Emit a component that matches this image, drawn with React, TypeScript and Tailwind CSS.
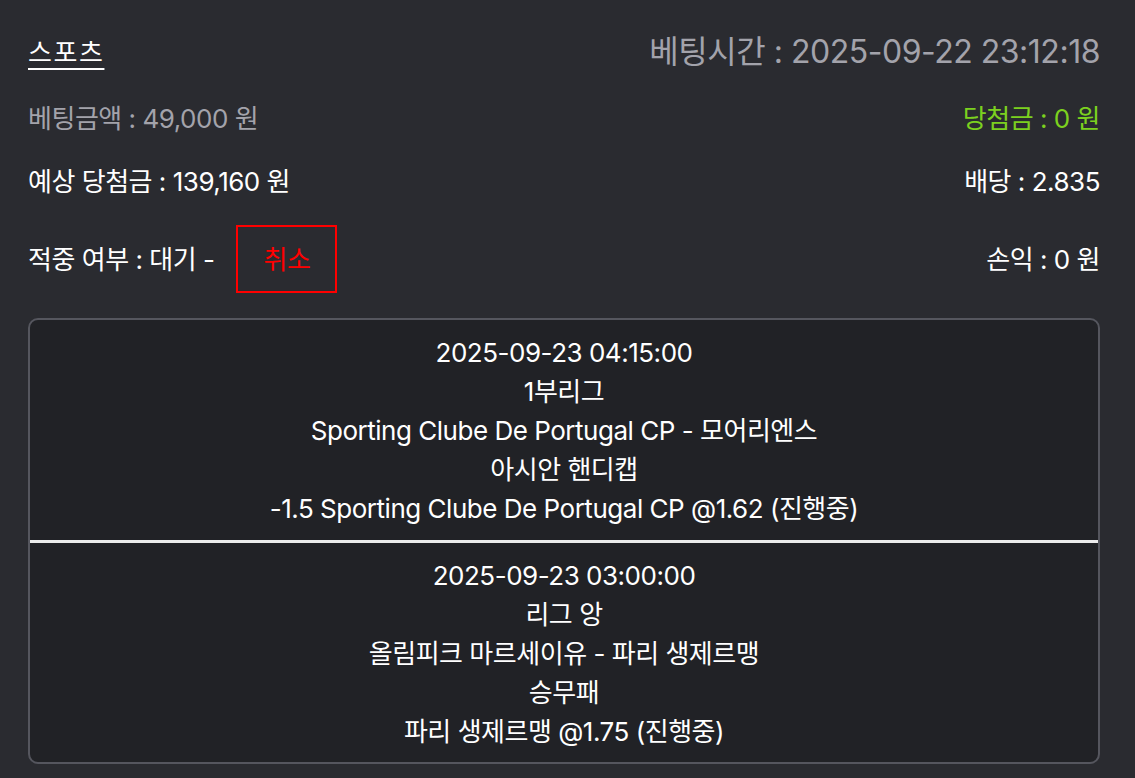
import React from "react";

const FONT = { fontFamily: '"Inter", "Noto Sans CJK KR", sans-serif' };

type Game = {
  time: string;
  league: string;
  match: string;
  market: string;
  pick: string;
};

const games: Game[] = [
  {
    time: "2025-09-23 04:15:00",
    league: "1부리그",
    match: "Sporting Clube De Portugal CP - 모어리엔스",
    market: "아시안 핸디캡",
    pick: "-1.5 Sporting Clube De Portugal CP @1.62 (진행중)",
  },
  {
    time: "2025-09-23 03:00:00",
    league: "리그 앙",
    match: "올림피크 마르세이유 - 파리 생제르맹",
    market: "승무패",
    pick: "파리 생제르맹 @1.75 (진행중)",
  },
];

export default function App() {
  return (
    <div
      className="min-h-[778px] w-full bg-[#2a2b30] pl-[28px] pr-[35px] pt-[24px] pb-[13px] text-white tracking-[-0.03em]"
      style={FONT}
    >
      {/* Header */}
      <div className="flex h-[56px] items-center justify-between">
        <span className="text-[26px] tracking-[0.06em] underline decoration-[2px] underline-offset-[6px]">
          스포츠
        </span>
        <span className="text-[32px] text-[#a3a3ab]">베팅시간 : 2025-09-22 23:12:18</span>
      </div>

      <div className="mt-[14px] flex h-[48px] items-center justify-between text-[26px]">
        <span className="text-[#a3a3ab]">베팅금액 : 49,000 원</span>
        <span className="text-[#7cd11f]">당첨금 : 0 원</span>
      </div>

      <div className="mt-[15px] flex h-[48px] items-center justify-between text-[26px]">
        <span>예상 당첨금 : 139,160 원</span>
        <span>배당 : 2.835</span>
      </div>

      <div className="mt-[20px] flex h-[68px] items-center justify-between text-[26px]">
        <div className="flex items-center">
          <span>적중 여부 : 대기 -</span>
          <button className="ml-[22px] flex h-[68px] w-[101px] items-center justify-center border-2 border-[#ff0000] text-[26px] text-[#ff0000]">
            취소
          </button>
        </div>
        <span>손익 : 0 원</span>
      </div>

      {/* Games */}
      <div className="mt-[25px] overflow-hidden rounded-[10px] border-2 border-[#55565e] bg-[#212226]">
        {games.map((g, i) => (
          <div
            key={i}
            className={
              "flex flex-col items-center pt-[13px] text-[26px] leading-[39px] " +
              (i < games.length - 1 ? "pb-[12px] border-b-[3px] border-[#ececec]" : "pb-[11px]")
            }
          >
            <span>{g.time}</span>
            <span>{g.league}</span>
            <span>{g.match}</span>
            <span>{g.market}</span>
            <span>{g.pick}</span>
          </div>
        ))}
      </div>
    </div>
  );
}
